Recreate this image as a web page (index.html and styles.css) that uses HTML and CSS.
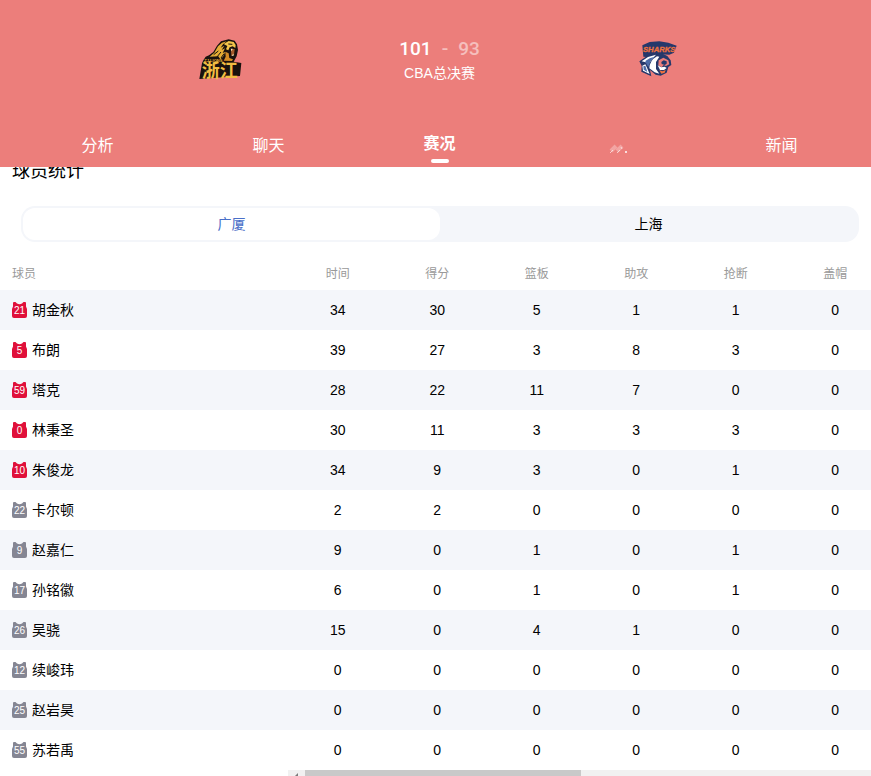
FILE: index.html
```html
<!DOCTYPE html>
<html lang="zh-CN">
<head>
    <meta charset="UTF-8">
    <meta name="viewport" content="width=device-width, initial-scale=1.0">
    <title>CBA总决赛</title>
    <link rel="stylesheet" href="styles.css">
</head>
<body>
    <svg class="sprite" aria-hidden="true">
        <symbol id="jersey" viewBox="0 0 15 16">
            <path d="M1 .5 2 0H3.500L5 1.500Q7.500 3 10 1.500L11.500 0H13L14 .5V4.500L15 7V14Q15 16 13 16H2Q0 16 0 14V7L1 4.500Z"/>
        </symbol>
    </svg>

    <header class="header">
        <div class="match">
            <div class="team">
                <svg class="logo" viewBox="30 24 132 126">
                    <path fill="#19120e" d="M43 91 50 80 60 76 73 66 84 47 96 34 119 28 137 32 144 43 147 60 143 79 134 95 157 99 153 138 31 147 39 100Z"/>
                    <path fill="#e5ad35" d="M62 80 76 68 87 49 99 38 113 34 102 43 95 53 106 47 98 60 108 55 101 69 109 66 102 80 94 88 88 79Z"/>
                    <path fill="#f3c54b" d="M104 42 119 33 134 36 140 45 139 54 131 49 122 52 118 61 111 58 115 48Z"/>
                    <path fill="#d48c25" d="M109 65 119 70 121 84 132 88 129 93 104 92 110 80Z"/>
                    <path fill="#a55b2b" d="M126 57 137 57 135 75 127 78Z"/>
                    <path fill="#fff4cc" d="M125 56 128 64 131 56ZM128 77 133 71 134 77Z"/>
                    <path fill="none" stroke="#19120e" stroke-width="3" d="M74 74 88 63M83 82 96 66M96 84 105 71M118 42 130 43"/>
                    <text class="lion-en" x="46" y="97">ZJ LIONS</text>
                    <text class="lion-cn" x="38" y="140">浙江</text>
                </svg>
            </div>
            <div class="result">
                <div class="score"><span>101</span><span class="dim">-</span><span class="dim">93</span></div>
                <div class="stage">CBA总决赛</div>
            </div>
            <div class="team">
                <svg class="logo" viewBox="24 24 132 126">
                    <path fill="#26386b" d="M43 46 65 36 94 34 121 38 146 47 138 68 124 74 85 72 64 82 46 80Z"/>
                    <text class="shark-text" x="45" y="67">SHARKS</text>
                    <path fill="#26386b" d="M34 94 57 78 84 68 104 71 118 78 128 91 130 105 121 111 116 128 98 137 83 134 66 120 70 139 40 125 41 108Z"/>
                    <path fill="#fff" d="M41 94 60 81 84 74 73 87 62 101 53 97ZM43 107 52 103 57 113 65 132 45 122Z"/>
                    <path fill="#4c6ca8" d="M52 93 65 85 80 80 68 93 61 111 55 101ZM46 109 52 107 58 126 47 119Z"/>
                    <path fill="#fff" d="M64 115Q65 91 87 79L94 80 84 96 84 117 94 131 80 127Z"/>
                    <path fill="#ec7e7b" d="M92 91 106 83 121 91 124 103 114 108 107 105 101 112 91 106Z"/>
                    <path fill="#26386b" d="M100 96 107 91 116 94 116 101 110 105 101 102Z"/>
                    <path fill="#fff" d="M89 106 100 112 110 110 116 114 108 120 96 120Z"/>
                    <path fill="#ef713d" d="M94 121 104 124 113 120 110 128 100 131Z"/>
                </svg>
            </div>
        </div>
        <nav class="tabs">
            <a href="#">分析</a>
            <a href="#">聊天</a>
            <a href="#" class="active">赛况</a>
            <a href="#" class="faded">
                <svg width="20" height="12" viewBox="0 0 20 12">
                    <path fill="none" stroke="#fff" stroke-opacity=".3" stroke-width="4" d="M2 8 7 3M8 8 13 3"/>
                    <path fill="none" stroke="#fff" stroke-opacity=".6" stroke-width="1" d="M1 10 4 7M8 10 11 7M12 4 13 6"/>
                    <circle cx="17" cy="9" r="1" fill="#fff"/>
                </svg>
            </a>
            <a href="#">新闻</a>
        </nav>
    </header>

    <main class="content">
        <h2>球员统计</h2>
        <div class="switch">
            <button type="button" class="selected">广厦</button>
            <button type="button">上海</button>
        </div>
        <table class="stats">
            <thead>
                <tr><th class="player">球员</th><th>时间</th><th>得分</th><th>篮板</th><th>助攻</th><th>抢断</th><th>盖帽</th></tr>
            </thead>
            <tbody>
                <tr><td class="player"><span class="num on"><svg><use href="#jersey"/></svg><b>21</b></span>胡金秋</td><td>34</td><td>30</td><td>5</td><td>1</td><td>1</td><td>0</td></tr>
                <tr><td class="player"><span class="num on"><svg><use href="#jersey"/></svg><b>5</b></span>布朗</td><td>39</td><td>27</td><td>3</td><td>8</td><td>3</td><td>0</td></tr>
                <tr><td class="player"><span class="num on"><svg><use href="#jersey"/></svg><b>59</b></span>塔克</td><td>28</td><td>22</td><td>11</td><td>7</td><td>0</td><td>0</td></tr>
                <tr><td class="player"><span class="num on"><svg><use href="#jersey"/></svg><b>0</b></span>林秉圣</td><td>30</td><td>11</td><td>3</td><td>3</td><td>3</td><td>0</td></tr>
                <tr><td class="player"><span class="num on"><svg><use href="#jersey"/></svg><b>10</b></span>朱俊龙</td><td>34</td><td>9</td><td>3</td><td>0</td><td>1</td><td>0</td></tr>
                <tr><td class="player"><span class="num"><svg><use href="#jersey"/></svg><b>22</b></span>卡尔顿</td><td>2</td><td>2</td><td>0</td><td>0</td><td>0</td><td>0</td></tr>
                <tr><td class="player"><span class="num"><svg><use href="#jersey"/></svg><b>9</b></span>赵嘉仁</td><td>9</td><td>0</td><td>1</td><td>0</td><td>1</td><td>0</td></tr>
                <tr><td class="player"><span class="num"><svg><use href="#jersey"/></svg><b>17</b></span>孙铭徽</td><td>6</td><td>0</td><td>1</td><td>0</td><td>1</td><td>0</td></tr>
                <tr><td class="player"><span class="num"><svg><use href="#jersey"/></svg><b>26</b></span>吴骁</td><td>15</td><td>0</td><td>4</td><td>1</td><td>0</td><td>0</td></tr>
                <tr><td class="player"><span class="num"><svg><use href="#jersey"/></svg><b>12</b></span>续峻玮</td><td>0</td><td>0</td><td>0</td><td>0</td><td>0</td><td>0</td></tr>
                <tr><td class="player"><span class="num"><svg><use href="#jersey"/></svg><b>25</b></span>赵岩昊</td><td>0</td><td>0</td><td>0</td><td>0</td><td>0</td><td>0</td></tr>
                <tr><td class="player"><span class="num"><svg><use href="#jersey"/></svg><b>55</b></span>苏若禹</td><td>0</td><td>0</td><td>0</td><td>0</td><td>0</td><td>0</td></tr>
            </tbody>
        </table>
        <div class="scrollbar">
            <svg width="17" height="17" viewBox="0 0 17 17"><path fill="#7a7a7a" d="M5 8 10 3V13Z"/></svg>
            <div class="thumb"></div>
        </div>
    </main>
</body>
</html>
```
FILE: styles.css
```css
* {
    box-sizing: border-box;
}

body {
    margin: 0;
    height: 100vh;
    overflow: hidden;
    display: flex;
    flex-direction: column;
    background: #fff;
    color: #000;
    font-family: "Liberation Sans", "Noto Sans CJK SC", sans-serif;
    font-size: 14px;
}

.sprite {
    display: none;
}

/* Marcador */
.header {
    flex: none;
    padding-left: 8px;
    background: #ec7e7b;
    color: #fff;
}

.match {
    display: grid;
    grid-template-columns: 1fr 1fr 1fr;
    width: 76%;
    height: 124px;
    margin: 0 auto;
    padding-top: 37px;
}

.team {
    display: flex;
    justify-content: center;
    align-items: flex-start;
}

.logo {
    width: 44px;
    height: 44px;
}

.lion-en {
    font: bold 12px "Liberation Sans", sans-serif;
    fill: #e5ad35;
}

.lion-cn {
    font: bold 54px "Noto Sans CJK SC", sans-serif;
    fill: #f2bd42;
}

.shark-text {
    font: italic bold 23px "Liberation Sans", sans-serif;
    fill: #ef713d;
    stroke: #ef713d;
    stroke-width: 1px;
}

.result {
    text-align: center;
}

.score {
    display: flex;
    justify-content: center;
    gap: 10px;
    font: 500 19px/24px Roboto, sans-serif;
}

.dim {
    opacity: 0.5;
}

.stage {
    line-height: 24px;
}

/* Pestañas */
.tabs {
    display: grid;
    grid-template-columns: repeat(5, 1fr);
    height: 43px;
    padding: 0 4px;
}

.tabs a {
    display: flex;
    flex-direction: column;
    align-items: center;
    color: #fff;
    font-size: 16px;
    line-height: 43px;
    text-decoration: none;
}

.tabs .active {
    font-weight: bold;
    line-height: 40px;
}

.tabs .active::after {
    content: "";
    width: 18px;
    height: 4px;
    margin-top: -5px;
    border-radius: 2px;
    background: #fff;
}

.tabs .faded {
    padding: 19px 0 0 16px;
}

/* Estadísticas */
.content {
    flex: 1;
    min-height: 0;
    overflow: hidden;
}

h2 {
    margin: -9px 0 0;
    padding-left: 12px;
    font-size: 18px;
    font-weight: normal;
    line-height: 26px;
}

.switch {
    display: flex;
    height: 36px;
    margin: 22px 12px 0 21px;
    padding: 2px;
    border-radius: 14px;
    background: #f4f6fa;
}

.switch button {
    flex: 1;
    padding: 0 0 2px;
    border: 0;
    border-radius: 12px;
    background: none;
    color: #000;
    font: inherit;
}

.switch .selected {
    background: #fff;
    color: #4a6fc8;
}

.stats {
    width: calc(100% + 14px);
    margin-top: 14px;
    border-collapse: collapse;
    table-layout: fixed;
}

.stats th {
    height: 34px;
    padding: 0 0 2px;
    color: #999;
    font-size: 12px;
    font-weight: normal;
    text-align: center;
}

.stats td {
    height: 40px;
    padding: 0;
    text-align: center;
}

.stats .player {
    width: 288px;
    padding-left: 12px;
    text-align: left;
}

.stats td.player {
    padding-bottom: 2px;
}

.stats tbody tr:nth-child(odd) {
    background: #f4f6fa;
}

.num {
    display: inline-grid;
    width: 15px;
    height: 16px;
    margin-right: 5px;
    vertical-align: -3px;
    color: #858693;
}

.num.on {
    color: #e0103a;
}

.num svg,
.num b {
    grid-area: 1 / 1;
    width: 15px;
    height: 16px;
    fill: currentColor;
}

.num b {
    color: #fff;
    font-size: 10px;
    font-weight: normal;
    line-height: 17px;
    text-align: center;
}

.scrollbar {
    display: flex;
    height: 17px;
    margin-left: 288px;
    background: #f1f1f1;
}

.thumb {
    width: 276px;
    background: #c9c9c9;
}
```
